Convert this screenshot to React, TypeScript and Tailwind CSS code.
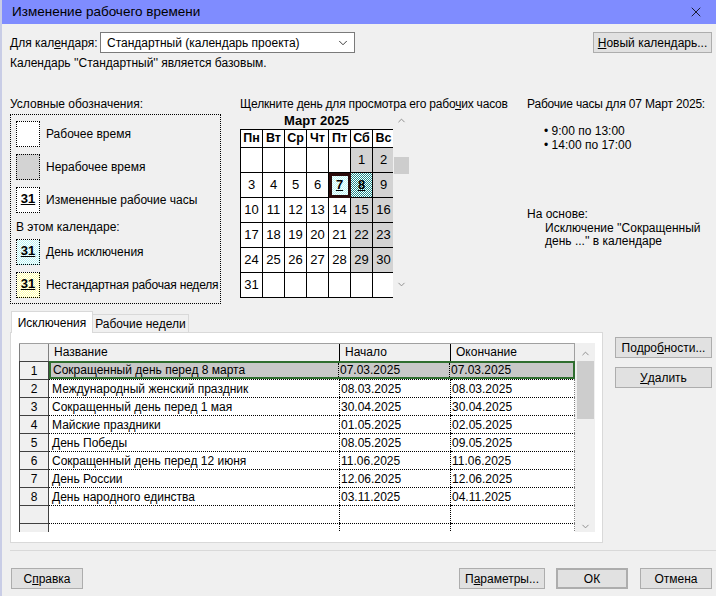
import { ChevronDown, ChevronUp, X } from 'lucide-react';

const weeks: (number | null)[][] = [
  [null, null, null, null, null, 1, 2],
  [3, 4, 5, 6, 7, 8, 9],
  [10, 11, 12, 13, 14, 15, 16],
  [17, 18, 19, 20, 21, 22, 23],
  [24, 25, 26, 27, 28, 29, 30],
  [31, null, null, null, null, null, null],
];

const rows = [
  ['Сокращенный день перед 8 марта', '07.03.2025', '07.03.2025'],
  ['Международный женский праздник', '08.03.2025', '08.03.2025'],
  ['Сокращенный день перед 1 мая', '30.04.2025', '30.04.2025'],
  ['Майские праздники', '01.05.2025', '02.05.2025'],
  ['День Победы', '08.05.2025', '09.05.2025'],
  ['Сокращенный день перед 12 июня', '11.06.2025', '11.06.2025'],
  ['День России', '12.06.2025', '12.06.2025'],
  ['День народного единства', '03.11.2025', '04.11.2025'],
];

function Btn({ children, className = '' }: { children: React.ReactNode; className?: string }) {
  return (
    <div className={`h-[21px] flex items-center justify-center bg-[#e1e1e1] border border-[#adadad] text-[12px] ${className}`}>
      {children}
    </div>
  );
}

function LegendBox({ className = '', label }: { className?: string; label?: boolean }) {
  return (
    <div className={`shrink-0 w-[24px] h-[26px] border border-dotted border-black flex items-start justify-center pt-[4px] ${className}`}>
      {label && <span className="font-bold underline text-[13px] leading-[14px]">31</span>}
    </div>
  );
}

export default function App() {
  return (
    <div className="w-[716px] h-[596px] bg-[#f0f0f0] overflow-hidden font-['Liberation_Sans',sans-serif] text-[12px] text-black border-l-2 border-[#c9cde6] whitespace-nowrap">
      {/* title bar */}
      <div className="h-[24px] bg-[#7f8cff] flex items-center justify-between pl-[10px] pr-[12px]">
        <span className="text-[13.5px]">Изменение рабочего времени</span>
        <X size={16} strokeWidth={1.2} />
      </div>

      {/* calendar selector */}
      <div className="flex items-center mt-[8px] pl-[8px] pr-[4px]">
        <span className="w-[90px]">
          Для кал<span className="underline">е</span>ндаря:
        </span>
        <div className="w-[255px] h-[21px] bg-white border border-[#7a7a7a] flex items-center justify-between pl-[6px] pr-[4px]">
          <span>Стандартный (календарь проекта)</span>
          <ChevronDown size={14} strokeWidth={1.3} />
        </div>
        <Btn className="ml-auto w-[119px]">
          <span className="underline">Н</span>овый календарь...
        </Btn>
      </div>
      <div className="pl-[8px] mt-[2px] leading-[16px]">Календарь ''Стандартный'' является базовым.</div>

      {/* middle section */}
      <div className="flex mt-[25px] h-[208px]">
        {/* legend */}
        <div className="ml-[8px] w-[211px] flex flex-col">
          <div className="leading-[16px]">Условные обозначения:</div>
          <div className="mt-[2px] h-[191px] border border-dotted border-black pl-[5px] pt-[6px] flex flex-col">
            <div className="flex items-center gap-[6px]">
              <LegendBox className="bg-white" />
              <span>Рабочее время</span>
            </div>
            <div className="flex items-center gap-[6px] mt-[7px]">
              <LegendBox className="bg-[#d3d3d3]" />
              <span>Нерабочее время</span>
            </div>
            <div className="flex items-center gap-[6px] mt-[7px]">
              <LegendBox className="bg-white" label />
              <span>Измененные рабочие часы</span>
            </div>
            <div className="mt-[7px] leading-[14px]">В этом календаре:</div>
            <div className="flex items-center gap-[6px] mt-[5px]">
              <LegendBox className="bg-[conic-gradient(#b8f4f4_25%,#ffffff_0_50%,#b8f4f4_0_75%,#ffffff_0)] bg-[length:2px_2px]" label />
              <span>День исключения</span>
            </div>
            <div className="flex items-center gap-[6px] mt-[7px]">
              <LegendBox className="bg-[conic-gradient(#ffffa8_25%,#ffffff_0_50%,#ffffa8_0_75%,#ffffff_0)] bg-[length:2px_2px]" label />
              <span className="tracking-[-0.2px]">Нестандартная рабочая неделя</span>
            </div>
          </div>
        </div>

        {/* calendar */}
        <div className="ml-[19px] w-[287px] flex flex-col">
          <div className="leading-[16px] tracking-[-0.2px]">
            Щелкните день для просмотра его рабо<span className="underline">ч</span>их часов
          </div>
          <div className="flex">
            <div className="w-[153px] overflow-hidden">
              <div className="text-center font-bold text-[13px] leading-[17px] w-[153px]">Март 2025</div>
              <div className="w-[155px] border-l border-t border-black bg-white">
                <div className="flex">
                  {['Пн', 'Вт', 'Ср', 'Чт', 'Пт', 'Сб', 'Вс'].map((d) => (
                    <div key={d} className="w-[22px] h-[18px] border-r border-b border-black flex items-center justify-center font-bold text-[12.5px]">
                      {d}
                    </div>
                  ))}
                </div>
                {weeks.map((w, wi) => (
                  <div key={wi} className="flex">
                    {w.map((d, di) => {
                      const weekend = di >= 5 && d !== null && d !== 31;
                      let cls = weekend ? 'bg-[#d3d3d3]' : 'bg-white';
                      if (d === 7) cls = 'bg-[conic-gradient(#b8f4f4_25%,#ffffff_0_50%,#b8f4f4_0_75%,#ffffff_0)] bg-[length:2px_2px] outline outline-3 -outline-offset-3 outline-[#2a0a0a]';
                      if (d === 8) cls = 'bg-[conic-gradient(#1c8c8c_25%,#ffffff_0_50%,#1c8c8c_0_75%,#ffffff_0)] bg-[length:2px_2px]';
                      const special = d === 7 || d === 8;
                      return (
                        <div key={di} className={`w-[22px] h-[25px] border-r border-b border-black flex items-center justify-center text-[13px] ${cls}`}>
                          {d !== null && (
                            <span className={special ? 'font-bold underline' : ''}>{d}</span>
                          )}
                        </div>
                      );
                    })}
                  </div>
                ))}
              </div>
            </div>
            <div className="w-[16px] flex flex-col items-center pt-[3px]">
              <ChevronUp size={11} strokeWidth={2} className="text-[#888]" />
              <div className="w-[15px] h-[17px] bg-[#cdcdcd] mt-[31px]" />
              <ChevronDown size={11} strokeWidth={2} className="text-[#888] mt-[105px]" />
            </div>
          </div>
        </div>

        {/* working hours info */}
        <div className="flex flex-col">
          <div className="leading-[16px] tracking-[-0.2px]">Рабочие часы для 07 Март 2025:</div>
          <div className="pl-[17px] mt-[12px] leading-[14px]">
            <div>• 9:00 по 13:00</div>
            <div>• 14:00 по 17:00</div>
          </div>
          <div className="mt-[54px] leading-[16px]">На основе:</div>
          <div className="pl-[18px] leading-[13px]">
            Исключение ''Сокращенный
            <br />
            день ...'' в календаре
          </div>
        </div>
      </div>

      {/* tabs + table + side buttons */}
      <div className="flex mt-[7px]">
        <div className="ml-[8px] flex flex-col">
          <div className="flex items-end h-[21px]">
            <div className="ml-[1px] w-[82px] h-[22px] bg-white border border-b-0 border-[#d9d9d9] flex items-center justify-center relative z-10 -mb-[1px]">
              Исключения
            </div>
            <div className="w-[96px] h-[18px] bg-[#f0f0f0] border border-l-0 border-b-0 border-[#d9d9d9] flex items-center justify-center">
              Рабочие недели
            </div>
          </div>
          <div className="w-[593px] h-[211px] bg-white border border-[#d9d9d9] pt-[10px] pl-[8px]">
            <div className="flex h-[189px] overflow-hidden">
              <div className="w-[556px]">
                {/* header */}
                <div className="flex h-[18px] bg-[#f0f0f0] border-t border-[#a0a0a0]">
                  <div className="w-[30px] border-l border-r border-[#808080]" />
                  <div className="w-[291px] pl-[5px] flex items-end border-r border-black">Название</div>
                  <div className="w-[111px] pl-[5px] flex items-end border-r border-black">Начало</div>
                  <div className="w-[124px] pl-[5px] flex items-end border-r border-[#a0a0a0]">Окончание</div>
                </div>
                {[...rows, ['', '', ''], ['', '', '']].map((r, i) => {
                  const sel = i === 0;
                  return (
                    <div key={i} className="flex h-[18px]">
                      <div className="w-[30px] bg-[#f0f0f0] border-l border-r border-t border-[#404040] flex items-center justify-center">
                        {r[0] ? i + 1 : ''}
                      </div>
                      {sel ? (
                        <div className="flex w-[526px] bg-[#c8c8c8] border-2 border-[#2f6e2f]">
                          <div className="w-[288px] pl-[2px] flex items-center border-r border-dotted border-black">{r[0]}</div>
                          <div className="w-[111px] pl-[1px] flex items-center border-r border-dotted border-black">{r[1]}</div>
                          <div className="w-[123px] pl-[1px] flex items-center">{r[2]}</div>
                        </div>
                      ) : (
                        <>
                          <div className="w-[291px] pl-[3px] flex items-center border-t border-r border-dotted border-black">{r[0]}</div>
                          <div className="w-[111px] pl-[1px] flex items-center border-t border-r border-dotted border-black">{r[1]}</div>
                          <div className="w-[124px] pl-[1px] flex items-center border-t border-dotted border-black border-r border-r-[#808080] border-r-solid">{r[2]}</div>
                        </>
                      )}
                    </div>
                  );
                })}
              </div>
              <div className="w-[20px] bg-[#f0f0f0] flex flex-col items-center">
                <ChevronUp size={11} strokeWidth={2} className="text-[#888] mt-[5px]" />
                <div className="w-[17px] h-[58px] bg-[#cdcdcd] mt-[2px]" />
                <ChevronDown size={11} strokeWidth={2} className="text-[#888] mt-[102px]" />
              </div>
            </div>
          </div>
        </div>
        <div className="ml-[12px] mt-[26px] flex flex-col gap-[9px]">
          <Btn className="w-[97px]">
            Подро<span className="underline">б</span>ности...
          </Btn>
          <Btn className="w-[97px]">
            <span className="underline">У</span>далить
          </Btn>
        </div>
      </div>

      {/* separator */}
      <div className="ml-[8px] mt-[7px] border-t border-[#d9d9d9]" />

      {/* bottom buttons */}
      <div className="flex mt-[17px] pl-[9px] pr-[4px]">
        <Btn className="w-[72px]">
          С<span className="underline">п</span>равка
        </Btn>
        <Btn className="ml-auto w-[86px]">
          П<span className="underline">а</span>раметры...
        </Btn>
        <Btn className="ml-[11px] w-[72px] border-2 border-[#0078d7]">ОК</Btn>
        <Btn className="ml-[12px] w-[72px]">Отмена</Btn>
      </div>
    </div>
  );
}
